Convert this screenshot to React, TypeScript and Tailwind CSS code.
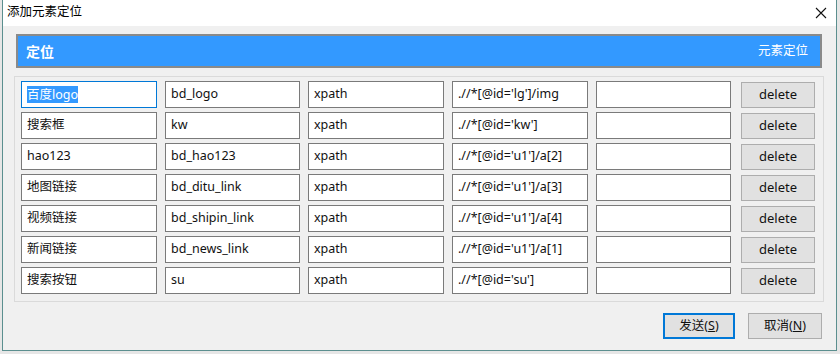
const rows = [
  ["百度logo", "bd_logo", "xpath", ".//*[@id='lg']/img"],
  ["搜索框", "kw", "xpath", ".//*[@id='kw']"],
  ["hao123", "bd_hao123", "xpath", ".//*[@id='u1']/a[2]"],
  ["地图链接", "bd_ditu_link", "xpath", ".//*[@id='u1']/a[3]"],
  ["视频链接", "bd_shipin_link", "xpath", ".//*[@id='u1']/a[4]"],
  ["新闻链接", "bd_news_link", "xpath", ".//*[@id='u1']/a[1]"],
  ["搜索按钮", "su", "xpath", ".//*[@id='su']"],
]

const font = "font-['Segoe_UI','Noto_Sans','Noto_Sans_CJK_SC',sans-serif]"

// column widths, taken from the dialog
const widths = ["w-[136px]", "w-[135px]", "w-[136px]", "w-[136px]", "w-[135px]"]

const Field = ({ value, focus, w }: { value: string; focus?: boolean; w: string }) => (
  <div
    className={`${w} h-[27px] bg-white flex items-center px-[5px] text-[12.5px] text-[#111] border ${
      focus ? "border-[#0078d7]" : "border-[#7a7a7a]"
    }`}
  >
    {focus ? <span className="bg-[#3399ff] text-white leading-[17px]">{value}</span> : value}
  </div>
)

const App = () => {
  return (
    <div className={`w-[840px] h-[354px] bg-[#e6e6e6] ${font}`}>
      <div className="ml-[2px] w-[835px] h-[351px] border-x border-b border-[#5b8f8f] flex flex-col bg-[#f0f0f0]">
        {/* title bar */}
        <div className="h-[26px] bg-white flex items-center justify-between pl-[4px] pr-[8px]">
          <span className="text-[12.5px] text-black -mt-[1px]">添加元素定位</span>
          <svg width="12" height="12" viewBox="0 0 12 12" className="mr-[1px]">
            <path d="M1 1 L11 11 M11 1 L1 11" stroke="#111" strokeWidth="1.1" />
          </svg>
        </div>

        {/* header */}
        <div className="ml-[13px] mt-[8px] w-[806px] h-[34px] bg-[#3399ff] border-2 border-[#8a8a8a] flex items-center justify-between pl-[8px] pr-[12px] text-white">
          <span className="text-[14px] font-bold">定位</span>
          <span className="text-[12.5px]">元素定位</span>
        </div>

        {/* list panel */}
        <div className="ml-[11px] mt-[8px] w-[810px] border border-[#dadada] pl-[6px] pt-[4px] pb-[7px] flex flex-col gap-[4px]">
          {rows.map((r, i) => (
            <div key={i} className="flex items-center gap-[8px]">
              <Field w={widths[0]} value={r[0]} focus={i === 0} />
              <Field w={widths[1]} value={r[1]} />
              <Field w={widths[2]} value={r[2]} />
              <Field w={widths[3]} value={r[3]} />
              <Field w={widths[4]} value="" />
              <button className="ml-[2px] w-[74px] h-[26px] bg-[#e1e1e1] border border-[#adadad] text-[13px] text-[#111]">
                delete
              </button>
            </div>
          ))}
        </div>

        {/* footer */}
        <div className="flex justify-end gap-[13px] mt-[11px] pr-[14px]">
          <button className="w-[72px] h-[26px] bg-[#e1e1e1] border-2 border-[#0078d7] text-[12.5px] text-[#111]">
            发送(<span className="underline">S</span>)
          </button>
          <button className="w-[74px] h-[26px] bg-[#e1e1e1] border border-[#adadad] text-[12.5px] text-[#111]">
            取消(<span className="underline">N</span>)
          </button>
        </div>
      </div>
    </div>
  )
}

export default App
